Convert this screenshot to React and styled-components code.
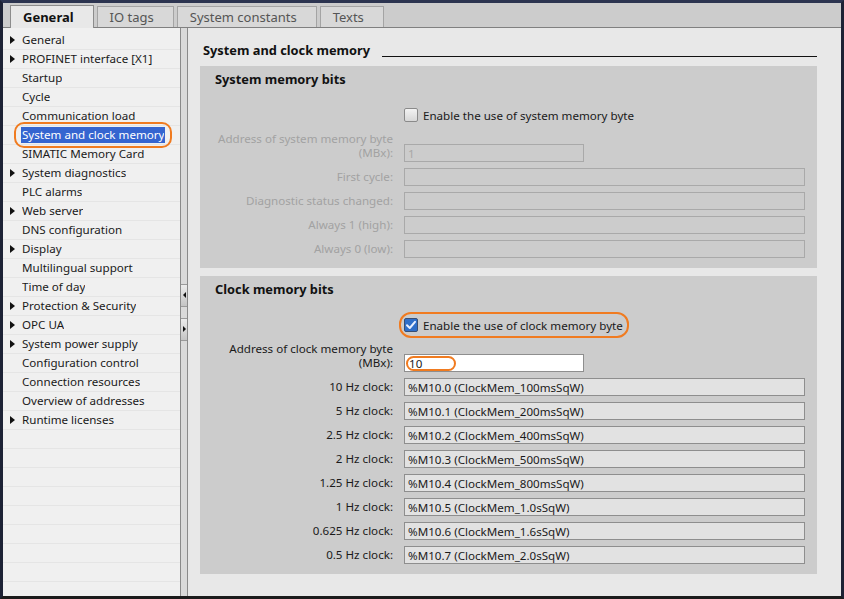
import React from "react";
import styled, { createGlobalStyle } from "styled-components";

const GlobalStyle = createGlobalStyle`
  * { box-sizing: border-box; }
  body {
    margin: 0;
    background: #1b1b1b;
    font-family: "Noto Sans", "DejaVu Sans", sans-serif;
  }
`;

const Frame = styled.div`
  width: 844px;
  height: 599px;
  border-style: solid;
  border-width: 3px;
  border-color: #2c3450 #1d2235 #1b1b1b #1d2235;
  display: flex;
  flex-direction: column;
  background: #e8e8e8;
  overflow: hidden;
`;

const TabBar = styled.div`
  height: 25px;
  flex: none;
  display: flex;
  align-items: flex-end;
  gap: 3px;
  padding-left: 7px;
  background: #cccccc;
  border-bottom: 1px solid #808080;
`;

const Tab = styled.div`
  height: ${p => (p.active ? "23px" : "21px")};
  margin-bottom: ${p => (p.active ? "-1px" : "0")};
  padding: 0 19px 0 12px;
  display: flex;
  align-items: center;
  font-size: 13px;
  font-weight: ${p => (p.active ? 700 : 400)};
  color: ${p => (p.active ? "#111" : "#555")};
  background: ${p => (p.active ? "#e8e8e8" : "#d8d8d8")};
  border: 1px solid ${p => (p.active ? "#8c8c8c" : "#a4a4a4")};
  border-bottom: none;
`;

const Body = styled.div`
  flex: 1;
  display: flex;
  min-height: 0;
`;

const Sidebar = styled.div`
  width: 177px;
  flex: none;
  background: #f0f0f0;
  padding-top: 3px;
  overflow: hidden;
`;

const NavRow = styled.div`
  height: 19px;
  flex: none;
  display: flex;
  align-items: center;
  padding-left: 7px;
  gap: 7px;
  border-bottom: 1px solid #e5e5e5;
  font-size: 11.6px;
  color: #1a1a1a;
  white-space: nowrap;
`;

const Arrow = styled.span`
  width: 5px;
  height: 8px;
  flex: none;
  border-style: solid;
  border-width: ${p => (p.show ? "4px 0 4px 5px" : "0")};
  border-color: transparent transparent transparent #111;
`;

const NavLabel = styled.span`
  position: relative;
  margin-left: -1px;
  padding: 1px 1px;
  line-height: 14px;
  max-width: 144px;
  background: ${p => (p.selected ? "#3565d0" : "transparent")};
  color: ${p => (p.selected ? "#fff" : "inherit")};
  &::after {
    content: "";
    display: ${p => (p.selected ? "block" : "none")};
    position: absolute;
    left: -7px;
    right: -7px;
    top: -5px;
    bottom: -5px;
    border: 2px solid #f07b20;
    border-radius: 10px;
  }
`;

const NavText = styled.span`
  display: block;
  overflow: hidden;
`;

const Splitter = styled.div`
  width: 8px;
  flex: none;
  background: #dadada;
  border-left: 1px solid #8a8a8a;
  border-right: 1px solid #8a8a8a;
  display: flex;
  flex-direction: column;
  justify-content: center;
  gap: 11px;
`;

const SplitButton = styled.div`
  height: 23px;
  display: flex;
  align-items: center;
  justify-content: center;
  background: linear-gradient(to bottom, #ececec, #c4c4c4);
  border-top: 1px solid #9a9a9a;
  border-bottom: 1px solid #9a9a9a;
  &::before {
    content: "";
    border-style: solid;
    border-width: ${p => (p.dir === "left" ? "3px 3px 3px 0" : "3px 0 3px 3px")};
    border-color: ${p =>
      p.dir === "left"
        ? "transparent #111 transparent transparent"
        : "transparent transparent transparent #111"};
  }
`;

const Content = styled.div`
  flex: 1;
  min-width: 0;
  background: #e8e8e8;
  padding: 12px 24px 0 12px;
  display: flex;
  flex-direction: column;
  gap: 8px;
`;

const Heading = styled.div`
  height: 20px;
  flex: none;
  margin-bottom: -2px;
  padding-left: 3px;
  display: flex;
  align-items: center;
  font-size: 12.8px;
  font-weight: 700;
  color: #111;
  &::after {
    content: "";
    flex: 1;
    height: 1px;
    margin: 12px 0 0 12px;
    background: #111;
  }
`;

const Section = styled.div`
  flex: none;
  background: #cccccc;
  padding: 0 12px 10px 15px;
`;

const SectionTitle = styled.div`
  height: 26px;
  line-height: 26px;
  font-size: 12.8px;
  font-weight: 700;
  color: #111;
`;

const Form = styled.div`
  margin-top: 10px;
  display: grid;
  grid-template-columns: 178px 1fr;
  column-gap: 11px;
  row-gap: 6px;
  align-items: end;
`;

const Label = styled.div`
  margin-top: ${p => (p.tall ? "-2px" : "0")};
  text-align: right;
  font-size: 11.6px;
  line-height: 14px;
  padding-bottom: 2px;
  color: ${p => (p.disabled ? "#a2a2a2" : "#1a1a1a")};
`;

const CheckRow = styled.div`
  grid-column: 2;
  justify-self: start;
  height: 26px;
  margin-left: -5px;
  padding: 0 4px 0 3px;
  display: flex;
  align-items: center;
  gap: 5px;
  border: 2px solid ${p => (p.highlight ? "#f07b20" : "transparent")};
  border-radius: 12px;
  font-size: 11.6px;
  color: #1a1a1a;
`;

const Field = styled.div`
  height: 18px;
  width: ${p => (p.short ? "180px" : "401px")};
  padding: 0 3px;
  display: flex;
  align-items: center;
  font-size: 11.6px;
  color: ${p => (p.disabled ? "#a8a8a8" : "#1a1a1a")};
  background: ${p => p.bg};
  border: 1px solid ${p => (p.disabled ? "#a9a9a9" : "#8e8e8e")};
  white-space: nowrap;
`;

const Oval = styled.span`
  width: 50px;
  height: 15px;
  margin-left: -2px;
  padding-left: 1px;
  display: flex;
  align-items: center;
  border: 2px solid #f07b20;
  border-radius: 8px;
`;

const CheckBox = ({ checked }) => (
  <svg width="14" height="14" viewBox="0 0 14 14">
    <defs>
      <linearGradient id="cbOff" x1="0" y1="0" x2="0" y2="1">
        <stop offset="0" stopColor="#f4f4f4" />
        <stop offset="1" stopColor="#d6d6d6" />
      </linearGradient>
    </defs>
    <rect x="0.5" y="0.5" width="13" height="13" rx="1.5" fill={checked ? "#2f6fc9" : "url(#cbOff)"} stroke={checked ? "#3a4f72" : "#8a8a8a"} />
    {checked && (
      <path d="M3 7.2 L5.8 10 L11 3.8" fill="none" stroke="#e8f0ff" strokeWidth="2" strokeLinecap="round" strokeLinejoin="round" />
    )}
  </svg>
);

const navItems = [
  ["General", true],
  ["PROFINET interface [X1]", true],
  ["Startup", false],
  ["Cycle", false],
  ["Communication load", false],
  ["System and clock memory", false, true],
  ["SIMATIC Memory Card", false],
  ["System diagnostics", true],
  ["PLC alarms", false],
  ["Web server", true],
  ["DNS configuration", false],
  ["Display", true],
  ["Multilingual support", false],
  ["Time of day", false],
  ["Protection & Security", true],
  ["OPC UA", true],
  ["System power supply", true],
  ["Configuration control", false],
  ["Connection resources", false],
  ["Overview of addresses", false],
  ["Runtime licenses", true],
];

const systemRows = ["First cycle:", "Diagnostic status changed:", "Always 1 (high):", "Always 0 (low):"];

const clockRows = [
  ["10 Hz clock:", "%M10.0 (ClockMem_100msSqW)"],
  ["5 Hz clock:", "%M10.1 (ClockMem_200msSqW)"],
  ["2.5 Hz clock:", "%M10.2 (ClockMem_400msSqW)"],
  ["2 Hz clock:", "%M10.3 (ClockMem_500msSqW)"],
  ["1.25 Hz clock:", "%M10.4 (ClockMem_800msSqW)"],
  ["1 Hz clock:", "%M10.5 (ClockMem_1.0sSqW)"],
  ["0.625 Hz clock:", "%M10.6 (ClockMem_1.6sSqW)"],
  ["0.5 Hz clock:", "%M10.7 (ClockMem_2.0sSqW)"],
];

const App = () => (
  <Frame>
    <GlobalStyle />
    <TabBar>
      <Tab active>General</Tab>
      <Tab>IO tags</Tab>
      <Tab>System constants</Tab>
      <Tab>Texts</Tab>
    </TabBar>
    <Body>
      <Sidebar>
        {navItems.map(([label, arrow, selected]) => (
          <NavRow key={label}>
            <Arrow show={arrow} />
            <NavLabel selected={selected}>
              <NavText>{label}</NavText>
            </NavLabel>
          </NavRow>
        ))}
        {Array.from({ length: 10 }, (_, i) => (
          <NavRow key={"empty" + i} />
        ))}
      </Sidebar>
      <Splitter>
        <SplitButton dir="left" />
        <SplitButton dir="right" />
      </Splitter>
      <Content>
        <Heading>System and clock memory</Heading>
        <Section>
          <SectionTitle>System memory bits</SectionTitle>
          <Form>
            <CheckRow>
              <CheckBox />
              Enable the use of system memory byte
            </CheckRow>
            <Label disabled tall>
              Address of system memory byte
              <br />
              (MBx):
            </Label>
            <Field short disabled bg="transparent">1</Field>
            {systemRows.map(label => (
              <React.Fragment key={label}>
                <Label disabled>{label}</Label>
                <Field disabled bg="transparent" />
              </React.Fragment>
            ))}
          </Form>
        </Section>
        <Section>
          <SectionTitle>Clock memory bits</SectionTitle>
          <Form>
            <CheckRow highlight>
              <CheckBox checked />
              Enable the use of clock memory byte
            </CheckRow>
            <Label tall>
              Address of clock memory byte
              <br />
              (MBx):
            </Label>
            <Field short bg="#ffffff">
              <Oval>10</Oval>
            </Field>
            {clockRows.map(([label, value]) => (
              <React.Fragment key={label}>
                <Label>{label}</Label>
                <Field bg="#e2e2e2">{value}</Field>
              </React.Fragment>
            ))}
          </Form>
        </Section>
      </Content>
    </Body>
  </Frame>
);

export default App;
